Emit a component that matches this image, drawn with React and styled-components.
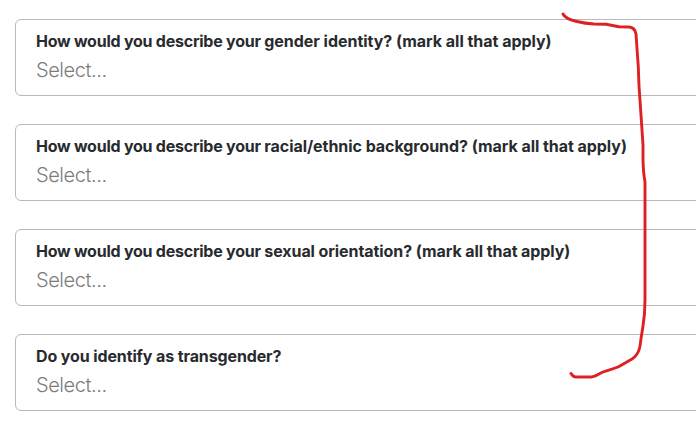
import React from "react";
import styled, { createGlobalStyle } from "styled-components";

const Global = createGlobalStyle`
  body { margin: 0; background: #fff; overflow: hidden; }
  * { box-sizing: border-box; }
`;
const Page = styled.main`
  position: relative;
  width: 696px;
  height: 434px;
  padding: 19px 0 0 15px;
  overflow: hidden;
  font-family: Inter, sans-serif;
`;
const Form = styled.form`
  display: flex;
  flex-direction: column;
  gap: 28px;
  width: 720px;
`;
const Field = styled.div`
  height: 77px;
  padding: 10px 20px 0;
  border: 1px solid #b9b9b9;
  border-radius: 6px;
`;
const Line = styled.div`
  display: flex;
  white-space: nowrap;
`;
const Label = styled.label`
  font-size: 16px;
  line-height: 22px;
  font-weight: 700;
  color: #282b2e;
  letter-spacing: -0.24px;
`;
const Topic = styled.span`
  letter-spacing: ${(p) => p.$tracking}px;
`;
const Placeholder = styled.span`
  margin-top: 5px;
  font-size: 20px;
  line-height: 26px;
  font-weight: 300;
  color: #7c7c7c;
  letter-spacing: -0.43px;
`;
const Bracket = styled.svg`
  position: absolute;
  inset: 0;
  pointer-events: none;
`;

const fields = [
  { prompt: "How would you describe your ", topic: "gender identity? (mark all that apply)", tracking: -0.03 },
  { prompt: "How would you describe your ", topic: "racial/ethnic background? (mark all that apply)", tracking: -0.05 },
  { prompt: "How would you describe your ", topic: "sexual orientation? (mark all that apply)", tracking: -0.08 },
  { prompt: "", topic: "Do you identify as transgender?", tracking: -0.12 },
];

export default function App() {
  return (
    <Page>
      <Global />
      <Form>
        {fields.map(({ prompt, topic, tracking }) => (
          <Field key={topic}>
            <Line>
              <Label>{prompt}<Topic $tracking={tracking}>{topic}</Topic></Label>
            </Line>
            <Line><Placeholder>Select...</Placeholder></Line>
          </Field>
        ))}
      </Form>
      <Bracket width="696" height="434" viewBox="0 0 696 434" fill="none">
        <path
          d="M563 14C565 18 570 20 577 21.5Q585 23.5 594 24L606 24.3L619 26.7L629 27Q635 27.5 636 34L638.3 67L639 86L641 115L643 145V160Q643.3 173 645 182V300Q645 314 643 326L640.8 340Q640 350 637 354Q635 357 632 359L619 366.5C614 369 608 370 603 372C598 374 595 377 591 377H576Q573 377 571 373.5"
          stroke="#df2023" strokeWidth="2.9" strokeLinecap="round" strokeLinejoin="round"
        />
      </Bracket>
    </Page>
  );
}
